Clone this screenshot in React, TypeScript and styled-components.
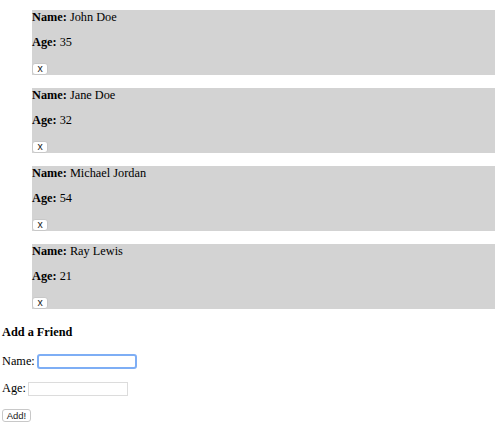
import React from "react";
import styled, { createGlobalStyle } from "styled-components";

const Global = createGlobalStyle`
  html, body { margin: 0; padding: 0; background: #fff; }
  body { font-family: "Liberation Serif", "Times New Roman", serif; font-size: 12px; color: #000; }
`;

const List = styled.ul`
  list-style: none;
  margin: 10px 5px 0 32px;
  padding: 0;
  display: flex;
  flex-direction: column;
  gap: 13px;
`;

const Item = styled.li`
  background: #d3d3d3;
  height: 65px;
  box-sizing: border-box;
  display: flex;
  flex-direction: column;
  align-items: flex-start;
`;

const Line = styled.p<{ $gap: number }>`
  margin: 0 0 ${(p) => p.$gap}px 0;
  line-height: 14px;
  font-size: 12.3px;
`;

const SmallButton = styled.button<{ $w: number; $h: number; $fs: number }>`
  width: ${(p) => p.$w}px;
  height: ${(p) => p.$h}px;
  padding: 0;
  margin: 0;
  box-sizing: border-box;
  background: #fff;
  border: 1px solid #c8c8c8;
  border-radius: 3px;
  font-family: "Liberation Sans", Arial, sans-serif;
  font-size: ${(p) => p.$fs}px;
  line-height: 1;
  color: #222;
  display: flex;
  align-items: center;
  justify-content: center;
`;

const Form = styled.div`
  padding: 16px 0 0 2px;
  display: flex;
  flex-direction: column;
  align-items: flex-start;
`;

const Title = styled.h3`
  margin: 0 0 14px 0;
  font-size: 12.3px;
  line-height: 15px;
  font-weight: bold;
`;

const Row = styled.label<{ $mb: number }>`
  display: flex;
  align-items: center;
  gap: 2px;
  height: 15px;
  margin-bottom: ${(p) => p.$mb}px;
  font-size: 12.3px;
`;

const Field = styled.input<{ $focused?: boolean }>`
  width: 100px;
  height: ${(p) => (p.$focused ? 15 : 14)}px;
  box-sizing: border-box;
  margin: 0;
  padding: 0 2px;
  background: #fff;
  border: ${(p) => (p.$focused ? "2px solid #7eaef5" : "1px solid #dcdcdc")};
  border-radius: ${(p) => (p.$focused ? "3px" : "0")};
  outline: none;
  font-size: 11px;
`;

const friends = [
  { name: "John Doe", age: 35 },
  { name: "Jane Doe", age: 32 },
  { name: "Michael Jordan", age: 54 },
  { name: "Ray Lewis", age: 21 },
];

export default function App() {
  return (
    <>
      <Global />
      <List>
        {friends.map((f) => (
          <Item key={f.name}>
            <Line $gap={11}>
              <b>Name:</b> {f.name}
            </Line>
            <Line $gap={13.7}>
              <b>Age:</b> {f.age}
            </Line>
            <SmallButton $w={16} $h={12} $fs={10.5}>x</SmallButton>
          </Item>
        ))}
      </List>
      <Form>
        <Title>Add a Friend</Title>
        <Row $mb={12}>
          Name:
          <Field $focused />
        </Row>
        <Row $mb={13}>
          Age:
          <Field />
        </Row>
        <SmallButton $w={29} $h={13} $fs={9.5}>Add!</SmallButton>
      </Form>
    </>
  );
}
